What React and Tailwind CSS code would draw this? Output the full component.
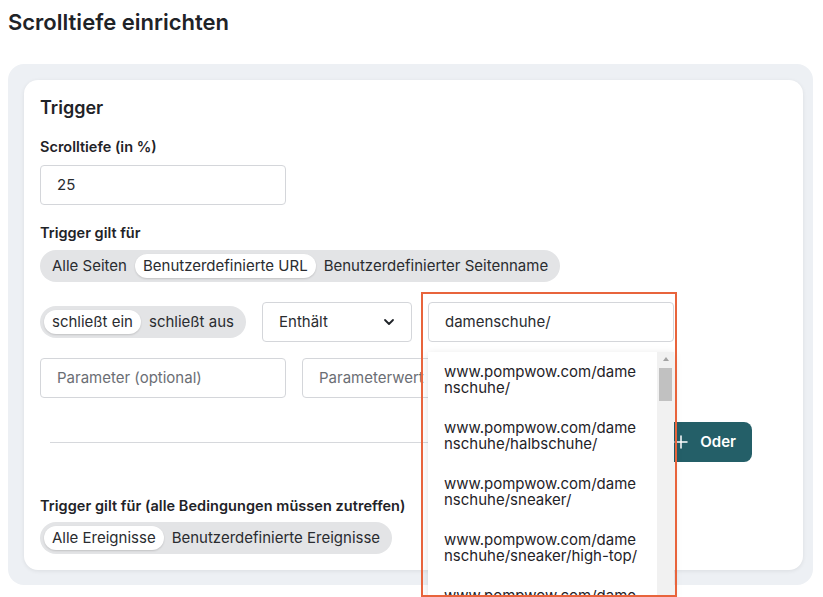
import React from "react";

function Segmented({ items, active }) {
  return (
    <div className="inline-flex items-center h-8 rounded-full bg-[#e3e4e6] px-1 text-[15px] text-[#2a2c30]">
      {items.map((it) => (
        <span
          key={it}
          className={
            it === active
              ? "h-6 flex items-center px-2 rounded-full bg-white shadow-[0_1px_2px_rgba(0,0,0,0.15)]"
              : "h-6 flex items-center px-2"
          }
        >
          {it}
        </span>
      ))}
    </div>
  );
}

const urls = [
  ["www.pompwow.com/dame", "nschuhe/"],
  ["www.pompwow.com/dame", "nschuhe/halbschuhe/"],
  ["www.pompwow.com/dame", "nschuhe/sneaker/"],
  ["www.pompwow.com/dame", "nschuhe/sneaker/high-top/"],
  ["www.pompwow.com/dame", "nschuhe/sneaker/low-top/"],
];

export default function App() {
  return (
    <div className="relative w-[823px] h-[597px] overflow-hidden bg-white font-['Inter',sans-serif] text-[#1f2328]">
      <h1 className="pl-2 pt-2 text-[22px] leading-7 font-semibold">
        Scrolltiefe einrichten
      </h1>

      <div className="ml-2 mt-7 w-[805px] rounded-[16px] bg-[#edf0f4] pl-4 pt-4 pr-[10px] pb-[15px]">
        <div className="rounded-[14px] bg-white px-4 pt-4 pb-4 shadow-[0_1px_4px_rgba(0,0,0,0.08)]">
          <h2 className="text-lg leading-6 font-semibold">Trigger</h2>

          <div className="mt-[17px] text-[14.5px] leading-5 font-semibold">Scrolltiefe (in %)</div>
          <div className="mt-2 h-10 w-[246px] rounded border border-[#d4d6da] flex items-center px-4 text-[15px] text-[#2a2c30]">
            25
          </div>

          <div className="mt-[18px] text-[14.5px] leading-5 font-semibold">Trigger gilt für</div>
          <div className="mt-[7px]">
            <Segmented
              items={["Alle Seiten", "Benutzerdefinierte URL", "Benutzerdefinierter Seitenname"]}
              active="Benutzerdefinierte URL"
            />
          </div>

          <div className="mt-5 flex items-center gap-4">
            <div className="w-[206px]">
              <Segmented items={["schließt ein", "schließt aus"]} active="schließt ein" />
            </div>
            <div className="h-10 w-[150px] rounded border border-[#d4d6da] flex items-center justify-between px-4 text-[15px] text-[#2a2c30]">
              <span>Enthält</span>
              <svg width="12" height="8" viewBox="0 0 12 8" fill="none">
                <path d="M2 2l4 4 4-4" stroke="#1f2328" strokeWidth="1.8" strokeLinecap="round" strokeLinejoin="round" />
              </svg>
            </div>
            <div className="h-10 w-[246px] rounded border border-[#d4d6da] flex items-center px-4 text-[15px] text-[#2a2c30]">
              damenschuhe/
            </div>
          </div>

          <div className="mt-4 flex items-center gap-4">
            <div className="h-10 w-[246px] rounded border border-[#d4d6da] flex items-center px-4 text-[15px] text-[#6b6e74]">
              Parameter (optional)
            </div>
            <div className="h-10 w-[246px] rounded border border-[#d4d6da] flex items-center px-4 text-[15px] text-[#6b6e74]">
              Parameterwert
            </div>
          </div>

          <div className="mt-6 mr-[35px] flex items-center">
            <div className="ml-[10px] flex-1 h-px bg-[#d6d8dc]" />
            <button className="ml-4 h-10 w-[88px] rounded-[8px] bg-[#245f68] text-white flex items-center justify-end gap-3 pr-4 text-[15px] font-semibold">
              <svg width="14" height="14" viewBox="0 0 14 14" fill="none">
                <path d="M7 1v12M1 7h12" stroke="white" strokeWidth="1.5" strokeLinecap="round" />
              </svg>
              <span>Oder</span>
            </button>
          </div>

          <div className="mt-[34px] text-[14.5px] leading-5 font-semibold tracking-[0.05px]">
            Trigger gilt für (alle Bedingungen müssen zutreffen)
          </div>
          <div className="mt-[6px]">
            <Segmented items={["Alle Ereignisse", "Benutzerdefinierte Ereignisse"]} active="Alle Ereignisse" />
          </div>
        </div>
      </div>

      {/* Autocomplete dropdown */}
      <div className="absolute left-[428px] top-[352px] w-[246px] h-[260px] flex bg-white shadow-[0_2px_8px_rgba(0,0,0,0.12)]">
        <div className="flex-1">
          {urls.map((u, i) => (
            <div key={i} className="px-4 py-3 text-[15px] leading-4 text-[#1f2328]">
              <div>{u[0]}</div>
              <div>{u[1]}</div>
            </div>
          ))}
        </div>
        <div className="w-[17px] bg-[#f1f1f1] flex flex-col items-center">
          <svg className="mt-[4px]" width="8" height="6" viewBox="0 0 8 6">
            <path d="M4 1L7 5H1z" fill="#a3a3a3" />
          </svg>
          <div className="mt-[6px] w-[13px] h-[33px] bg-[#c1c1c1]" />
        </div>
      </div>

      {/* Annotation box */}
      <div className="absolute left-[421px] top-[292px] w-[256px] h-[305px] border-2 border-[#e8643c] pointer-events-none" />
    </div>
  );
}
